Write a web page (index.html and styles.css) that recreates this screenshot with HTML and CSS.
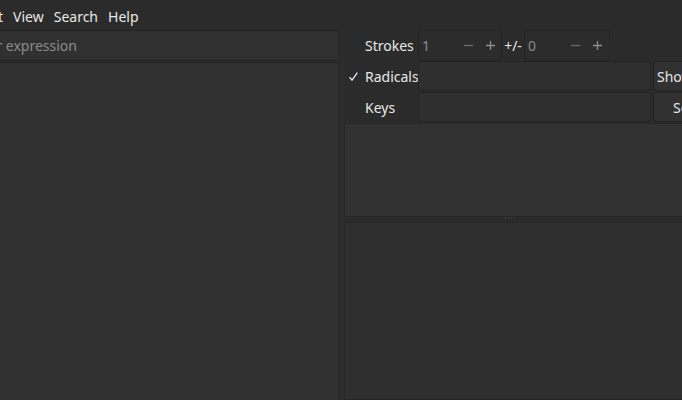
FILE: index.html
```html
<!DOCTYPE html>
<html>
<head>
<meta charset="utf-8">
<link rel="stylesheet" href="styles.css">
</head>
<body>
<div class="menubar">
  <span class="menu-item first">Edit</span>
  <span class="menu-item">View</span>
  <span class="menu-item">Search</span>
  <span class="menu-item">Help</span>
</div>
<div class="main">
  <div class="left">
    <div class="search-entry"><span class="placeholder">Enter expression</span></div>
    <div class="results"></div>
  </div>
  <div class="vsep"></div>
  <div class="right">
    <div class="form-row">
      <span class="check"></span>
      <span class="label">Strokes</span>
      <div class="spin spin1">
        <span class="spin-value v1">1</span>
        <span class="spin-btn minus"><svg width="9" height="9" viewBox="0 0 9 9"><path d="M0 4.5H9" stroke="#6c6c6c" stroke-width="1.3"/></svg></span>
        <span class="spin-btn plus"><svg width="9" height="9" viewBox="0 0 9 9"><path d="M0 4.5H9M4.5 0V9" stroke="#8e8e8e" stroke-width="1.3"/></svg></span>
      </div>
      <span class="pm">+/-</span>
      <div class="spin spin2">
        <span class="spin-value v2">0</span>
        <span class="spin-btn minus"><svg width="9" height="9" viewBox="0 0 9 9"><path d="M0 4.5H9" stroke="#6c6c6c" stroke-width="1.3"/></svg></span>
        <span class="spin-btn plus"><svg width="9" height="9" viewBox="0 0 9 9"><path d="M0 4.5H9M4.5 0V9" stroke="#8e8e8e" stroke-width="1.3"/></svg></span>
      </div>
    </div>
    <div class="form-row">
      <span class="check"><svg width="9" height="9" viewBox="0 0 9 9"><path d="M0.6 5.2L3 8.2L8.4 0.6" fill="none" stroke="#e8e8e6" stroke-width="1.3"/></svg></span>
      <span class="label">Radicals</span>
      <div class="entry"></div>
      <div class="button b1">Show radicals</div>
    </div>
    <div class="form-row">
      <span class="check"></span>
      <span class="label">Keys</span>
      <div class="entry"></div>
      <div class="button b2">Select</div>
    </div>
    <div class="panel upper"></div>
    <div class="hsep"><span class="grip"></span></div>
    <div class="panel lower"></div>
  </div>
</div>
</body>
</html>
```
FILE: styles.css
```css
html, body {
  margin: 0;
  padding: 0;
  width: 682px;
  height: 400px;
  overflow: hidden;
  background: #2b2b2b;
  font-family: "Noto Sans", "Open Sans", sans-serif;
  font-size: 14px;
  color: #e8e8e6;
}
.menubar {
  height: 30px;
  display: flex;
  align-items: center;
  margin-left: -27px;
  white-space: nowrap;
}
.menu-item {
  padding: 3px 5px 0;
  line-height: 27px;
}
.main {
  display: flex;
  height: 370px;
}
.left {
  width: 382px;
  margin-left: -42px;
  display: flex;
  flex-direction: column;
  flex: none;
}
.search-entry {
  box-sizing: border-box;
  height: 31px;
  background: #303030;
  border: 1px solid #232323;
  border-radius: 3px;
  padding-left: 8px;
  display: flex;
  align-items: center;
}
.placeholder {
  color: #8b8b8b;
  white-space: nowrap;
}
.results {
  flex: 1;
  margin-top: 1px;
  background: #303030;
  border-top: 1px solid #242424;
  border-right: 1px solid #242424;
}
.vsep {
  width: 4px;
  flex: none;
  background: #2c2c2c;
}
.right {
  flex: 1;
  display: flex;
  flex-direction: column;
  min-width: 0;
}
.form-row {
  display: flex;
  align-items: center;
  height: 30px;
  margin-bottom: 1px;
  padding-left: 5px;
  white-space: nowrap;
}
.check {
  width: 16px;
  flex: none;
  display: flex;
  align-items: center;
}
.label {
  width: 53px;
  flex: none;
}
.spin {
  box-sizing: border-box;
  height: 31px;
  display: flex;
  align-items: center;
  border: 1px solid #252525;
  border-radius: 3px;
  background: #2c2c2c;
  flex: none;
}
.spin1 { width: 84px; }
.spin2 { width: 86px; }
.spin-value {
  width: 39px;
  padding-left: 3px;
  color: #879199;
}
.spin-value.v2 { color: #8a8a8a; }
.spin-btn {
  width: 24px;
  display: flex;
  justify-content: center;
  align-items: center;
}
.pm {
  width: 22px;
  flex: none;
  text-align: center;
  color: #e8e8e6;
}
.entry {
  box-sizing: border-box;
  width: 233px;
  height: 30px;
  flex: none;
  background: #2f2f2f;
  border: 1px solid #232323;
  border-radius: 3px;
}
.button {
  box-sizing: border-box;
  margin-left: 2px;
  height: 30px;
  width: 110px;
  flex: none;
  display: flex;
  align-items: center;
  background: #313131;
  border: 1px solid #222;
  border-radius: 3px;
}
.b1 { padding-left: 3px; }
.b2 { padding-left: 19px; }
.panel {
  box-sizing: border-box;
  background: #323232;
  border: 1px solid #262626;
  border-right: none;
}
.upper {
  height: 94px;
}
.hsep {
  height: 5px;
  display: flex;
  justify-content: center;
  align-items: flex-start;
}
.grip {
  width: 10px;
  height: 2px;
  margin-left: -6px;
  background: repeating-linear-gradient(90deg, #3a3a3a 0 1px, transparent 1px 3px);
}
.lower {
  flex: 1;
  background: #2f2f2f;
}
```
